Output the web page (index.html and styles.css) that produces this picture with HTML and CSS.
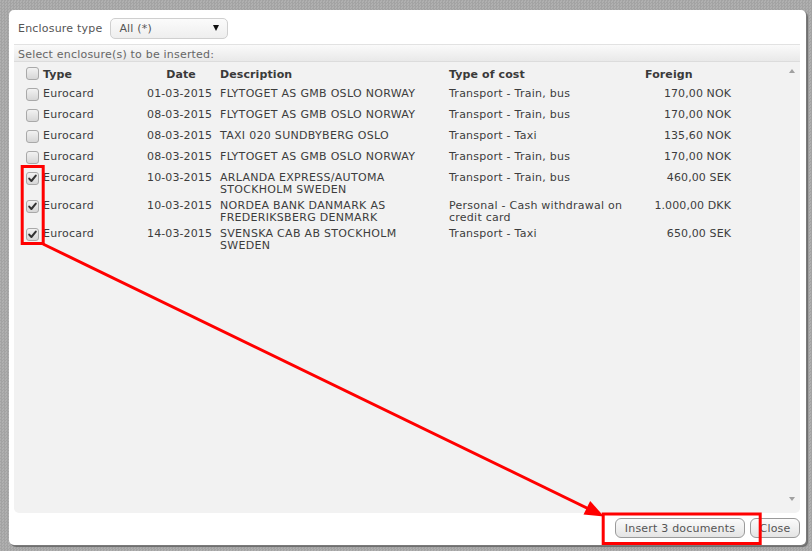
FILE: index.html
```html
<!DOCTYPE html>
<html>
<head>
<meta charset="utf-8">
<link rel="stylesheet" href="styles.css">
</head>
<body>
<div class="dialog">
  <div class="toolbar">
    <span class="label">Enclosure type</span>
    <div class="select"><span>All (*)</span><span class="caret"></span></div>
  </div>
  <div class="panel">
    <div class="panel-head">Select enclosure(s) to be inserted:</div>
    <div class="panel-body">
      <div class="list">
        <table class="grid">
          <colgroup>
            <col class="c-check"><col class="c-type"><col class="c-date"><col class="c-desc"><col class="c-cost"><col class="c-foreign"><col>
          </colgroup>
          <thead>
            <tr>
              <th class="chk"><span class="box"></span></th>
              <th class="type">Type</th>
              <th class="date">Date</th>
              <th class="desc">Description</th>
              <th class="cost">Type of cost</th>
              <th class="foreign">Foreign</th>
              <th></th>
            </tr>
          </thead>
          <tbody>
            <tr>
              <td class="chk"><span class="box"></span></td>
              <td class="type">Eurocard</td>
              <td class="date">01-03-2015</td>
              <td class="desc">FLYTOGET AS GMB OSLO NORWAY</td>
              <td class="cost">Transport - Train, bus</td>
              <td class="foreign">170,00 NOK</td>
              <td></td>
            </tr>
            <tr>
              <td class="chk"><span class="box"></span></td>
              <td class="type">Eurocard</td>
              <td class="date">08-03-2015</td>
              <td class="desc">FLYTOGET AS GMB OSLO NORWAY</td>
              <td class="cost">Transport - Train, bus</td>
              <td class="foreign">170,00 NOK</td>
              <td></td>
            </tr>
            <tr>
              <td class="chk"><span class="box"></span></td>
              <td class="type">Eurocard</td>
              <td class="date">08-03-2015</td>
              <td class="desc">TAXI 020 SUNDBYBERG OSLO</td>
              <td class="cost">Transport - Taxi</td>
              <td class="foreign">135,60 NOK</td>
              <td></td>
            </tr>
            <tr>
              <td class="chk"><span class="box"></span></td>
              <td class="type">Eurocard</td>
              <td class="date">08-03-2015</td>
              <td class="desc">FLYTOGET AS GMB OSLO NORWAY</td>
              <td class="cost">Transport - Train, bus</td>
              <td class="foreign">170,00 NOK</td>
              <td></td>
            </tr>
            <tr>
              <td class="chk"><span class="box checked"><svg viewBox="0 0 13 13" width="13" height="13"><path d="M3.2 6.6 L5.4 9 L9.8 3.6" fill="none" stroke="#333" stroke-width="2" stroke-linecap="round" stroke-linejoin="round"/></svg></span></td>
              <td class="type">Eurocard</td>
              <td class="date">10-03-2015</td>
              <td class="desc">ARLANDA EXPRESS/AUTOMA STOCKHOLM SWEDEN</td>
              <td class="cost">Transport - Train, bus</td>
              <td class="foreign">460,00 SEK</td>
              <td></td>
            </tr>
            <tr>
              <td class="chk"><span class="box checked"><svg viewBox="0 0 13 13" width="13" height="13"><path d="M3.2 6.6 L5.4 9 L9.8 3.6" fill="none" stroke="#333" stroke-width="2" stroke-linecap="round" stroke-linejoin="round"/></svg></span></td>
              <td class="type">Eurocard</td>
              <td class="date">10-03-2015</td>
              <td class="desc">NORDEA BANK DANMARK AS FREDERIKSBERG DENMARK</td>
              <td class="cost">Personal - Cash withdrawal on credit card</td>
              <td class="foreign">1.000,00 DKK</td>
              <td></td>
            </tr>
            <tr>
              <td class="chk"><span class="box checked"><svg viewBox="0 0 13 13" width="13" height="13"><path d="M3.2 6.6 L5.4 9 L9.8 3.6" fill="none" stroke="#333" stroke-width="2" stroke-linecap="round" stroke-linejoin="round"/></svg></span></td>
              <td class="type">Eurocard</td>
              <td class="date">14-03-2015</td>
              <td class="desc">SVENSKA CAB AB STOCKHOLM SWEDEN</td>
              <td class="cost">Transport - Taxi</td>
              <td class="foreign">650,00 SEK</td>
              <td></td>
            </tr>
          </tbody>
        </table>
      </div>
      <div class="scrollbar">
        <span class="arrow up"></span>
        <span class="arrow down"></span>
      </div>
    </div>
  </div>
  <div class="footer">
    <button class="btn btn-insert">Insert 3 documents</button>
    <button class="btn btn-close">Close</button>
  </div>
</div>
<svg class="annotation" width="812" height="551" viewBox="0 0 812 551">
  <rect x="22.2" y="166.5" width="21" height="77" fill="none" stroke="#ff0000" stroke-width="3"/>
  <line x1="43" y1="244" x2="589" y2="509" stroke="#ff0000" stroke-width="3"/>
  <polygon points="604,516.5 583.5,514.5 590.2,501" fill="#ff0000"/>
  <rect x="603.2" y="514" width="157" height="29.5" fill="none" stroke="#ff0000" stroke-width="3"/>
</svg>
</body>
</html>
```
FILE: styles.css
```css
html, body {
  margin: 0;
  padding: 0;
}
body {
  width: 812px;
  height: 551px;
  overflow: hidden;
  position: relative;
  font-family: "DejaVu Sans", Verdana, sans-serif;
  font-size: 11px;
  letter-spacing: 0.2px;
  color: #444;
  background-color: #a8a8a8;
  background-image: repeating-conic-gradient(#a3a3a3 0 25%, #b0b0b0 0 50%);
  background-size: 3px 3px;
}
.dialog {
  margin: 10px 0 0 9px;
  width: 797px;
  height: 535px;
  background: #fff;
  border-radius: 5px;
  box-shadow: 1px 1px 0 #7a7a7a, 2px 2px 1px #6a6a6a;
  display: flex;
  flex-direction: column;
  box-sizing: border-box;
}
.toolbar {
  height: 34px;
  display: flex;
  align-items: center;
  padding: 2px 0 0 9px;
  box-sizing: border-box;
  gap: 8px;
}
.label {
  color: #555;
}
.select {
  width: 118px;
  height: 21px;
  box-sizing: border-box;
  border: 1px solid #cfcfcf;
  border-radius: 5px;
  background: linear-gradient(#fbfbfb, #eeeeee);
  display: flex;
  align-items: center;
  justify-content: space-between;
  padding: 0 8px 0 8px;
  color: #555;
}
.caret {
  width: 0;
  height: 0;
  border-left: 3.5px solid transparent;
  border-right: 3.5px solid transparent;
  border-top: 6px solid #111;
}
.panel {
  margin: 0 6px 0 5px;
  height: 469px;
  background: #f2f2f2;
  border-radius: 0 0 5px 5px;
  display: flex;
  flex-direction: column;
}
.panel-head {
  height: 18px;
  box-sizing: border-box;
  border-top: 1px solid #e2e2e2;
  border-bottom: 1px solid #dcdcdc;
  background: linear-gradient(#fafafa, #e9e9e9);
  padding: 3px 0 0 4px;
  line-height: 13px;
  color: #666;
}
.panel-body {
  flex: 1;
  display: flex;
}
.list {
  flex: 1;
  padding: 2px 0 0 8px;
}
.grid {
  border-collapse: collapse;
  border-spacing: 0;
  table-layout: fixed;
  width: 762px;
}
.c-check { width: 19px; }
.c-type { width: 99px; }
.c-date { width: 76px; }
.c-desc { width: 229px; }
.c-cost { width: 195px; }
.c-foreign { width: 95px; }
.grid th, .grid td {
  padding: 3px 4px 1px 4px;
  line-height: 12px;
  vertical-align: top;
  text-align: left;
  white-space: normal;
  letter-spacing: 0.25px;
}
.grid th {
  font-weight: bold;
  color: #3a3a3a;
  padding-top: 5px;
  padding-bottom: 4px;
  vertical-align: middle;
  letter-spacing: 0.1px;
}
.grid td {
  color: #3d3d3d;
}
.grid td.desc {
  letter-spacing: 0.3px;
}
.grid .chk {
  padding: 3px 0 5px 4px;
  vertical-align: top;
}
.grid th.chk {
  padding-top: 3px;
  padding-bottom: 4px;
}
.grid .type {
  padding-left: 2px;
}
.grid td.date {
  text-align: right;
  white-space: nowrap;
  letter-spacing: 0.1px;
}
.grid th.date {
  text-align: center;
  padding-left: 10px;
}
.grid td.foreign {
  text-align: right;
  white-space: nowrap;
  letter-spacing: 0.1px;
}
.grid th.foreign {
  padding-left: 5px;
}
.box {
  display: block;
  width: 13px;
  height: 13px;
  box-sizing: border-box;
  border: 1px solid #a9a9a9;
  border-radius: 3px;
  background: linear-gradient(#f2f2f2, #d6d6d6);
  position: relative;
}
.box svg {
  position: absolute;
  left: -1px;
  top: -1px;
}
.scrollbar {
  width: 16px;
  position: relative;
}
.arrow {
  position: absolute;
  left: 5px;
  width: 0;
  height: 0;
  border-left: 3.5px solid transparent;
  border-right: 3.5px solid transparent;
}
.arrow.up {
  top: 7px;
  border-bottom: 4px solid #a0a0a0;
}
.arrow.down {
  bottom: 12px;
  border-top: 4px solid #a0a0a0;
}
.footer {
  flex: 1;
  display: flex;
  justify-content: flex-end;
  align-items: flex-start;
  gap: 5px;
  padding: 5px 6px 0 0;
}
.btn {
  font-family: "DejaVu Sans", Verdana, sans-serif;
  font-size: 11px;
  letter-spacing: 0.2px;
  color: #555;
  height: 20px;
  box-sizing: border-box;
  border: 1px solid #9a9a9a;
  border-radius: 6px;
  background: linear-gradient(#fbfbfb, #e4e4e4);
  padding: 0;
  margin: 0;
  line-height: 17px;
}
.btn-insert { width: 130px; }
.btn-close { width: 50px; }
.annotation {
  position: absolute;
  left: 0;
  top: 0;
  pointer-events: none;
}
```
